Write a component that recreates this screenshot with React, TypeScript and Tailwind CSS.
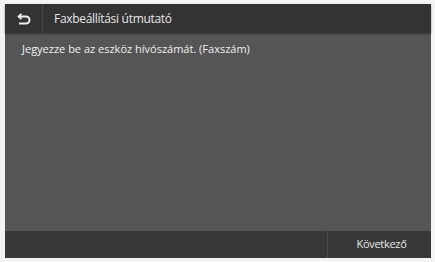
export default function App() {
  return (
    <div className="w-[435px] h-[262px] bg-[#f4f4f4] pl-[5px] pr-[4px] pt-[4px] pb-[4px]" style={{ fontFamily: '"Open Sans", "Liberation Sans", sans-serif' }}>
      <div className="flex h-full flex-col bg-[#555555]">
        <div className="flex h-[29px] items-center bg-[#333333] shadow-[0_1px_2px_rgba(0,0,0,0.4)]">
          <div className="flex h-full w-[37px] items-center justify-center">
            <svg width="15" height="12" viewBox="0 0 15 12" fill="none" stroke="#f0f0f0" strokeWidth="2">
              <path d="M3 3.5h7a3.5 3.5 0 0 1 0 7H3" />
              <path d="M5.5 0.8L2.5 3.5 5.5 6.2" strokeWidth="1.8" />
            </svg>
          </div>
          <div className="h-full w-px bg-[#444444]" />
          <span className="ml-[11px] text-[12px] tracking-[-0.3px] text-[#e6e6e6]">Faxbeállítási útmutató</span>
        </div>
        <div className="flex-1 px-[17px] pt-[8px]">
          <p className="text-[11px] tracking-[0px] text-[#f0f0f0]">Jegyezze be az eszköz hívószámát. (Faxszám)</p>
        </div>
        <div className="flex h-[27px] bg-[#383838]">
          <div className="flex-1" />
          <div className="w-px bg-[#4c4c4c]" />
          <div className="flex w-[103px] items-center justify-center pl-[4px] text-[11px] tracking-[-0.3px] text-[#e6e6e6]">Következő</div>
        </div>
      </div>
    </div>
  );
}
